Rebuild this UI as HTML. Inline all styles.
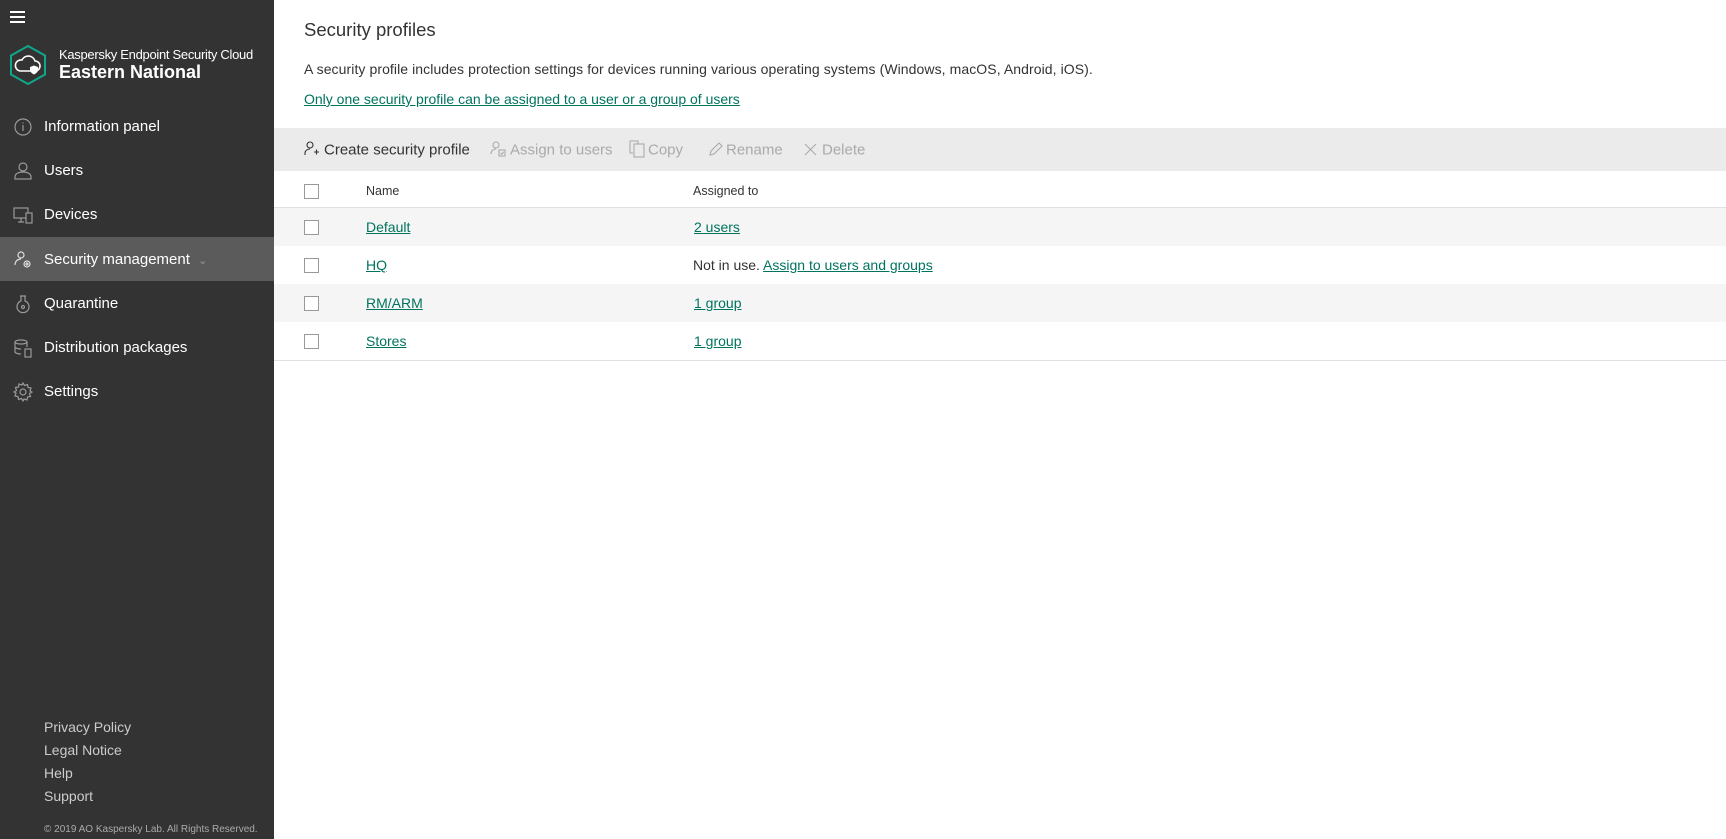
<!DOCTYPE html>
<html><head><meta charset="utf-8"><style>
*{margin:0;padding:0;box-sizing:border-box}
body{width:1726px;height:839px;overflow:hidden;background:#fff;font-family:"Liberation Sans",sans-serif;color:#333;position:relative}
.sb{position:absolute;left:0;top:0;width:274px;height:839px;background:#333}
.a{position:absolute;white-space:nowrap}
.nav{position:absolute;left:0;width:274px;height:44px;color:#fff;font-size:15px;line-height:46px}
.nav span{position:absolute;left:44px}
.nav svg{position:absolute;left:13px;top:13px}
.act{background:#5b5b5b}
.ft{position:absolute;left:44px;color:#ccc;font-size:14px}
.lnk{color:#00735f;text-decoration:underline}
.tb{position:absolute;top:150px;font-size:15px;transform:translateY(-50%)}
.row{position:absolute;left:274px;width:1452px;height:38px}
.cb{position:absolute;left:304px;width:15px;height:15px;border:1px solid #999;background:#fff}
.cell{position:absolute;font-size:14px}
</style></head><body>
<div class="sb">
 <div class="a" style="left:10px;top:11px;width:15px;height:2px;background:#fff;box-shadow:0 5px 0 #fff,0 10px 0 #fff"></div>
 <svg class="a" style="left:8px;top:44px" width="40" height="42" viewBox="0 0 40 42"><polygon points="20,2 37,11.5 37,30.5 20,40 3,30.5 3,11.5" fill="none" stroke="#0fa68a" stroke-width="2"/><path d="M12 27h15a5 5 0 0 0 0-10 7 7 0 0 0-13-1 5 5 0 0 0-2 11z" fill="none" stroke="#fff" stroke-width="1.6"/><path d="M22 23l4-1.5 4 1.5v3c0 2-2 3.5-4 4.5-2-1-4-2.5-4-4.5z" fill="#fff"/></svg>
 <div class="a" style="left:59px;top:47px;color:#fff;font-size:13px;letter-spacing:-0.3px">Kaspersky Endpoint Security Cloud</div>
 <div class="a" style="left:59px;top:62px;color:#fff;font-size:18px;font-weight:bold">Eastern National</div>

 <div class="nav" style="top:104px"><svg width="20" height="20" viewBox="0 0 20 20" fill="none" stroke="#999" stroke-width="1.2"><circle cx="10" cy="10" r="8"/><path d="M10 8v6M10 5.5v1"/></svg><span>Information panel</span></div>
 <div class="nav" style="top:148px"><svg width="20" height="20" viewBox="0 0 20 20" fill="none" stroke="#999" stroke-width="1.2"><circle cx="10" cy="6" r="4"/><path d="M2 18v-2c0-3 3-5 8-5s8 2 8 5v2z"/></svg><span>Users</span></div>
 <div class="nav" style="top:192px"><svg width="20" height="20" viewBox="0 0 20 20" fill="none" stroke="#999" stroke-width="1.2"><rect x="1" y="3" width="14" height="10"/><path d="M5 17h6M8 13v4"/><rect x="13" y="8" width="6" height="10" fill="#333"/></svg><span>Devices</span></div>
 <div class="nav act" style="top:237px"><svg width="20" height="20" viewBox="0 0 20 20" fill="none" stroke="#ddd" stroke-width="1.2"><circle cx="8" cy="5" r="3"/><path d="M2 15c0-4 3-6 6-6"/><circle cx="14" cy="14" r="3"/><circle cx="14" cy="14" r="1"/></svg><span>Security management <span style="position:static;color:#999;font-size:11px;margin-left:4px">&#8964;</span></span></div>
 <div class="nav" style="top:281px"><svg width="20" height="20" viewBox="0 0 20 20" fill="none" stroke="#999" stroke-width="1.2"><path d="M7 2h6M8 2v5a6 6 0 1 0 4 0V2"/><circle cx="10" cy="13" r="1.5"/></svg><span>Quarantine</span></div>
 <div class="nav" style="top:325px"><svg width="20" height="20" viewBox="0 0 20 20" fill="none" stroke="#999" stroke-width="1.2"><ellipse cx="8" cy="4" rx="6" ry="2"/><path d="M2 4v10c0 1 3 2 6 2M14 4v5M2 9c0 1 3 2 6 2"/><rect x="12" y="11" width="6" height="8"/></svg><span>Distribution packages</span></div>
 <div class="nav" style="top:369px"><svg width="20" height="20" viewBox="0 0 20 20" fill="none" stroke="#999" stroke-width="1.2"><circle cx="10" cy="10" r="3"/><path d="M10 1l1.5 2.5 3-1 .5 3 3 .5-1 3L19 10l-2.5 1.5 1 3-3 .5-.5 3-3-1L10 19l-1.5-2.5-3 1-.5-3-3-.5 1-3L1 10l2.5-1.5-1-3 3-.5.5-3 3 1z"/></svg><span>Settings</span></div>

 <div class="ft" style="top:719px">Privacy Policy</div>
 <div class="ft" style="top:742px">Legal Notice</div>
 <div class="ft" style="top:765px">Help</div>
 <div class="ft" style="top:788px">Support</div>
 <div class="ft" style="top:824px;font-size:10px;color:#aaa">© 2019 AO Kaspersky Lab. All Rights Reserved.</div>
</div>

<div class="a" style="left:304px;top:19px;font-size:18.5px">Security profiles</div>
<div class="a" style="left:304px;top:61px;font-size:14px;letter-spacing:0.08px">A security profile includes protection settings for devices running various operating systems (Windows, macOS, Android, iOS).</div>
<div class="a lnk" style="left:304px;top:91px;font-size:14px;letter-spacing:0px">Only one security profile can be assigned to a user or a group of users</div>

<div class="a" style="left:274px;top:128px;width:1452px;height:43px;background:#ebebeb"></div>
<svg class="a" style="left:304px;top:141px" width="16" height="16" viewBox="0 0 16 16" fill="none" stroke="#333" stroke-width="1.1"><circle cx="6" cy="4" r="3"/><path d="M1 14v-2c0-2 2-4 5-4M10 11h5M12.5 8.5v5"/></svg>
<div class="tb" style="left:324px">Create security profile</div>
<svg class="a" style="left:490px;top:141px" width="16" height="16" viewBox="0 0 16 16" fill="none" stroke="#aaa" stroke-width="1.1"><circle cx="6" cy="4" r="3"/><path d="M1 13c0-3 2-5 5-5"/><rect x="9" y="9" width="6" height="6"/><path d="M10.5 12l1.3 1.3 2-2.5"/></svg>
<div class="tb" style="left:510px;color:#aaa">Assign to users</div>
<svg class="a" style="left:629px;top:140px" width="16" height="18" viewBox="0 0 16 18" fill="none" stroke="#aaa" stroke-width="1.1"><path d="M4 13H1V1h8v3"/><rect x="5" y="4" width="10" height="13"/></svg>
<div class="tb" style="left:648px;color:#aaa">Copy</div>
<svg class="a" style="left:708px;top:141px" width="16" height="16" viewBox="0 0 16 16" fill="none" stroke="#aaa" stroke-width="1.1"><path d="M2 14l1-4 8-8 3 3-8 8z"/></svg>
<div class="tb" style="left:726px;color:#aaa">Rename</div>
<svg class="a" style="left:804px;top:143px" width="13" height="13" viewBox="0 0 13 13" stroke="#aaa" stroke-width="1.1"><path d="M1 1l11 11M12 1L1 12"/></svg>
<div class="tb" style="left:822px;color:#aaa">Delete</div>

<div class="row" style="top:171px;height:37px;border-bottom:1px solid #dde1e3"></div>
<div class="cb" style="top:184px"></div>
<div class="cell" style="left:366px;top:184px;font-size:12.5px">Name</div>
<div class="cell" style="left:693px;top:184px;font-size:12.5px">Assigned to</div>

<div class="row" style="top:208px;background:#f5f5f5"></div>
<div class="row" style="top:246px;background:#fff"></div>
<div class="row" style="top:284px;background:#f5f5f5"></div>
<div class="row" style="top:322px;height:39px;background:#fff;border-bottom:1px solid #dde1e3"></div>

<div class="cb" style="top:220px"></div><div class="cell lnk" style="left:366px;top:219px">Default</div><div class="cell lnk" style="left:694px;top:219px">2 users</div>
<div class="cb" style="top:258px"></div><div class="cell lnk" style="left:366px;top:257px">HQ</div><div class="cell" style="left:693px;top:257px">Not in use. <span class="lnk">Assign to users and groups</span></div>
<div class="cb" style="top:296px"></div><div class="cell lnk" style="left:366px;top:295px">RM/ARM</div><div class="cell lnk" style="left:694px;top:295px">1 group</div>
<div class="cb" style="top:334px"></div><div class="cell lnk" style="left:366px;top:333px">Stores</div><div class="cell lnk" style="left:694px;top:333px">1 group</div>
</body></html>
